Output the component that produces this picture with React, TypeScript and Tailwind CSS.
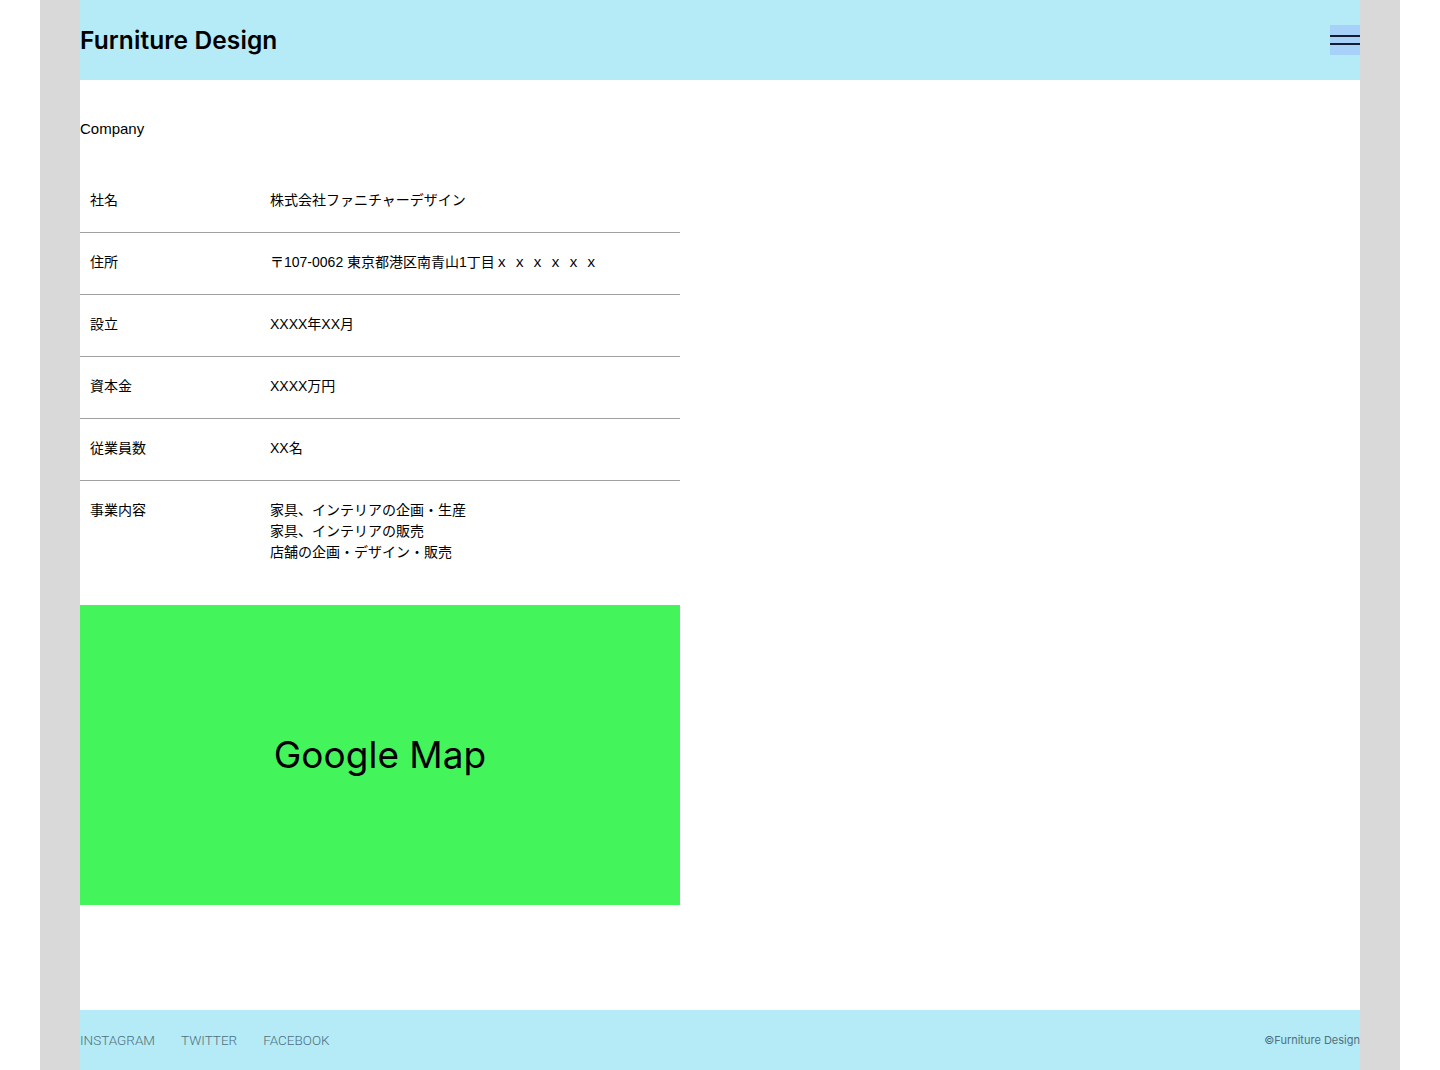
const rows: { label: string; value: string[] }[] = [
  { label: '社名', value: ['株式会社ファニチャーデザイン'] },
  { label: '住所', value: ['〒107-0062 東京都港区南青山1丁目ｘ ｘ ｘ ｘ ｘ ｘ'] },
  { label: '設立', value: ['XXXX年XX月'] },
  { label: '資本金', value: ['XXXX万円'] },
  { label: '従業員数', value: ['XX名'] },
  {
    label: '事業内容',
    value: ['家具、インテリアの企画・生産', '家具、インテリアの販売', '店舗の企画・デザイン・販売'],
  },
]

const jp = 'font-["Liberation_Sans","Noto_Sans_CJK_JP",sans-serif]'

export default function App() {
  return (
    <div className="min-h-screen bg-white px-10">
      <div className={`bg-[#d9d9d9] px-10 ${jp} text-black`}>
        {/* header */}
        <header className="flex h-20 items-center justify-between bg-[#b5eaf7]">
          <h1 className="font-['Inter',sans-serif] text-[24.5px] font-semibold tracking-[0.1px]">
            Furniture Design
          </h1>
          <button className="flex h-[30px] w-[30px] flex-col justify-center gap-[6px] bg-[#a8d1f9]">
            <span className="block h-[2px] w-full bg-[#141b2e]" />
            <span className="block h-[2px] w-full bg-[#141b2e]" />
          </button>
        </header>

        {/* main */}
        <main className="bg-white pb-[105px]">
          <h2 className="pt-[39px] text-[15px] leading-[20px]">Company</h2>

          <table className="mt-[32px] w-[600px] border-collapse text-[14px] leading-[21px]">
            <tbody>
              {rows.map((r, i) => (
                <tr key={r.label} className={i < rows.length - 1 ? 'border-b border-[#a0a0a0]' : ''}>
                  <th className="w-[190px] pt-[19px] pb-[21px] pl-[10px] text-left align-top font-normal">
                    {r.label}
                  </th>
                  <td className="pt-[19px] pb-[21px] align-top">
                    {r.value.map((v) => (
                      <div key={v}>{v}</div>
                    ))}
                  </td>
                </tr>
              ))}
            </tbody>
          </table>

          <div className="mt-[21px] flex h-[300px] w-[600px] items-center justify-center bg-[#43f55b]">
            <span className="font-['Inter',sans-serif] text-[37px]">Google Map</span>
          </div>
        </main>

        {/* footer */}
        <footer className="flex h-[60px] items-center justify-between bg-[#b5eaf7] text-[#4f717c]">
          <nav className="flex gap-[26px] font-['Roboto',sans-serif] text-[13.5px] font-light">
            <a href="#">INSTAGRAM</a>
            <a href="#">TWITTER</a>
            <a href="#">FACEBOOK</a>
          </nav>
          <p className="font-['Inter',sans-serif] text-[11px]">©Furniture Design</p>
        </footer>
      </div>
    </div>
  )
}
